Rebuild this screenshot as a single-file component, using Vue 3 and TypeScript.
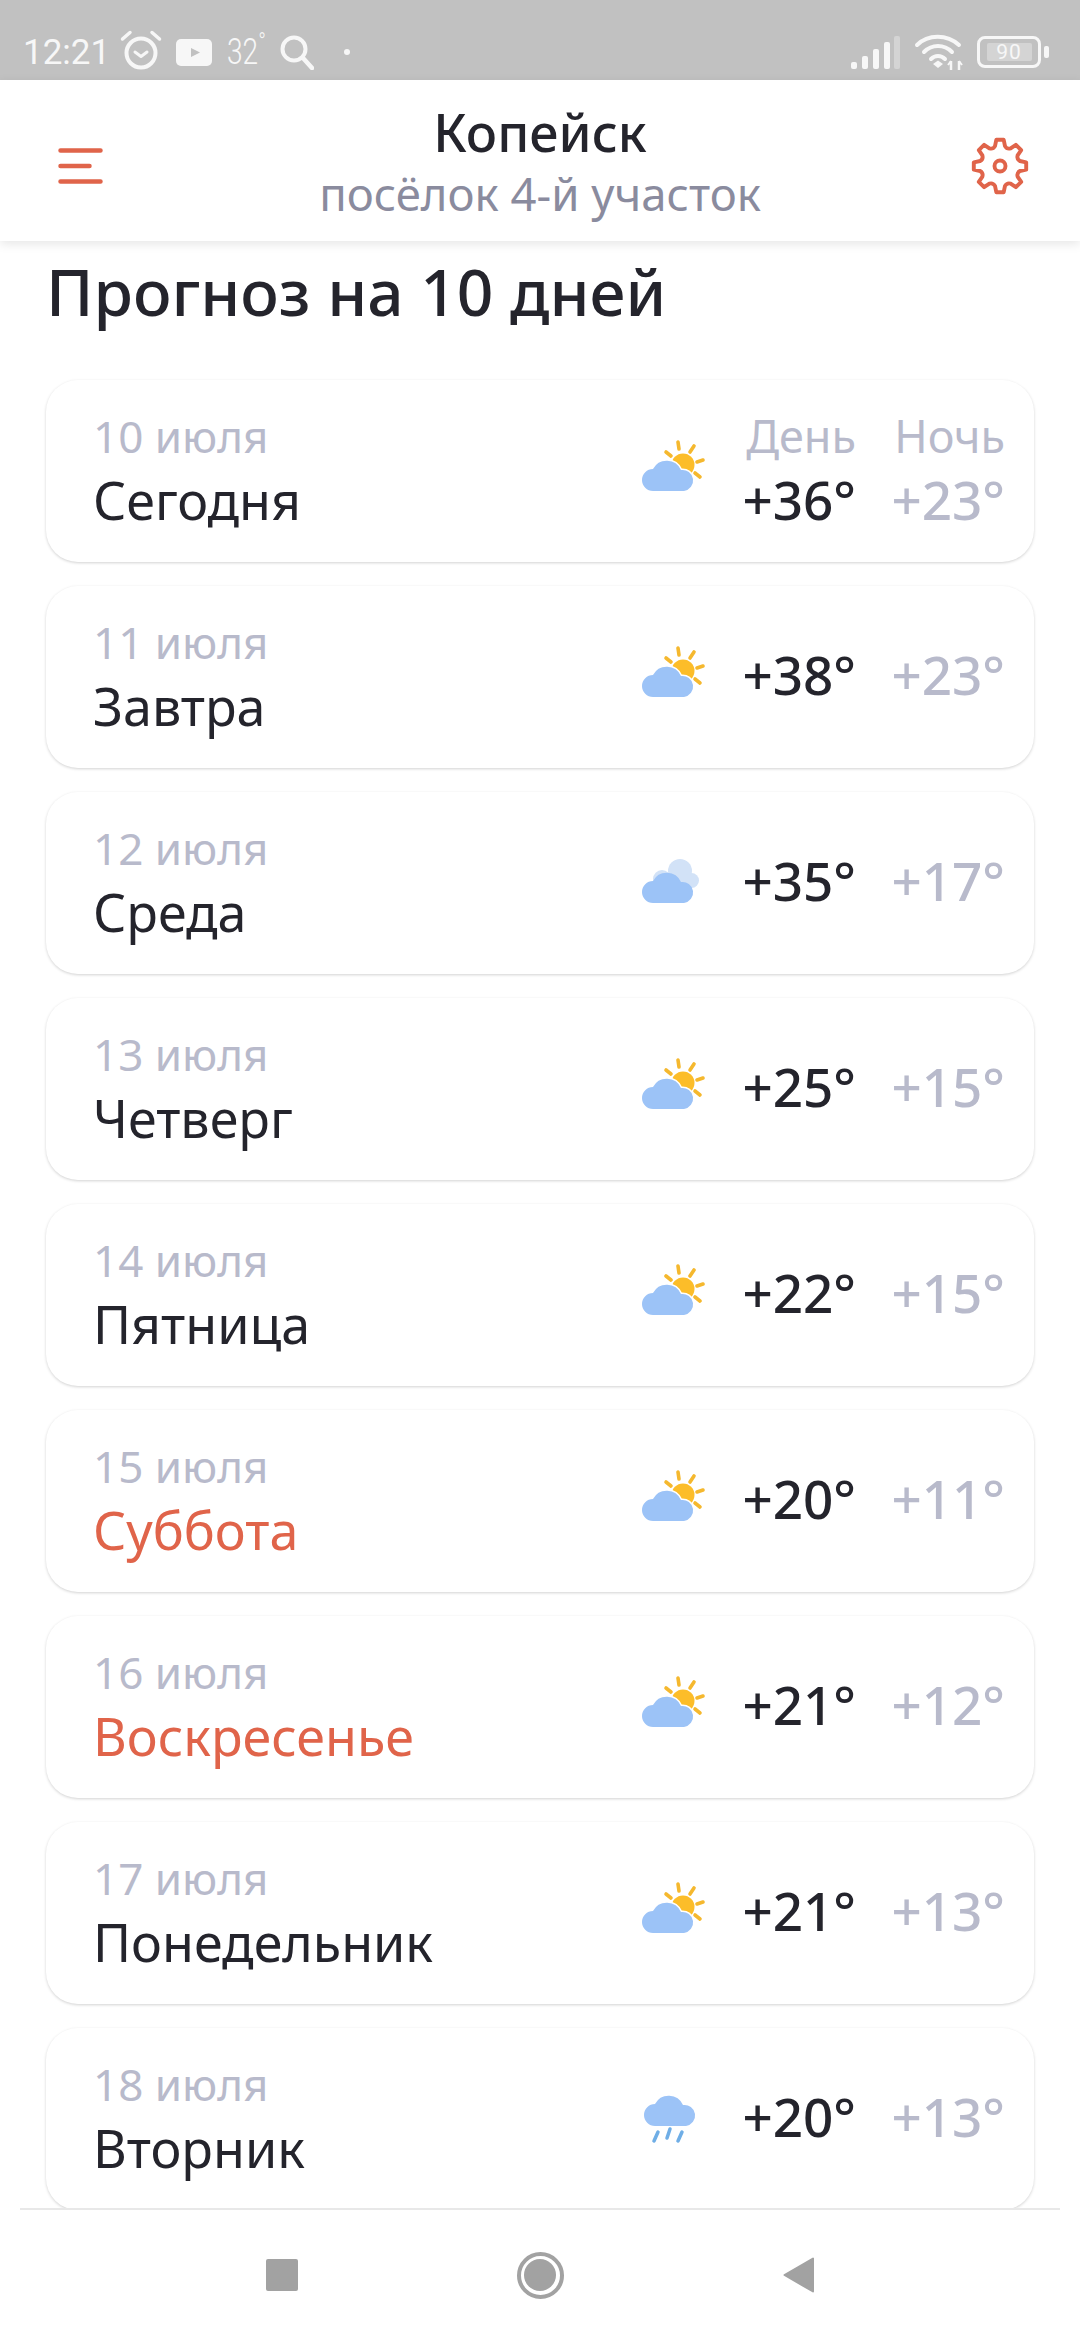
<template>
  <div class="screen">
    <div class="status-bar">
      <div class="status-left">
        <span class="time">12:21</span>
        <svg class="ic-alarm" viewBox="0 0 42 40" width="42" height="40">
          <circle cx="21" cy="23" r="14.5" fill="none" stroke="#f7f7f7" stroke-width="4" />
          <path d="M15 22l6 4.500 6-4.500" fill="none" stroke="#f7f7f7" stroke-width="3" stroke-linecap="round" stroke-linejoin="round" />
          <path d="M2.500 9L10 2.500M39.500 9L32 2.500" fill="none" stroke="#f7f7f7" stroke-width="3.500" stroke-linecap="round" />
        </svg>
        <svg class="ic-yt" viewBox="0 0 36 27" width="36" height="27">
          <rect width="36" height="27" rx="5" fill="#f7f7f7" />
          <path d="M15 9l9 4.500-9 4.500z" fill="#c1c1c1" />
        </svg>
        <span class="temp">32<sup>°</sup></span>
        <svg class="ic-search" viewBox="0 0 34 35" width="34" height="35">
          <circle cx="14" cy="14" r="11.500" fill="none" stroke="#f7f7f7" stroke-width="4" />
          <path d="M23 23l9 10" stroke="#f7f7f7" stroke-width="4.500" stroke-linecap="round" />
        </svg>
        <span class="dot"></span>
      </div>
      <div class="status-right">
        <svg viewBox="0 0 49 33" width="49" height="33">
          <rect x="0" y="26" width="6" height="7" rx="2" fill="#f7f7f7" />
          <rect x="11" y="20" width="6" height="13" rx="2" fill="#f7f7f7" />
          <rect x="22" y="13" width="6" height="20" rx="2" fill="#f7f7f7" />
          <rect x="33" y="6" width="6" height="27" rx="2" fill="#f7f7f7" />
          <rect x="43" y="0" width="6" height="33" rx="2" fill="#d4d4d4" />
        </svg>
        <svg viewBox="0 0 49 36" width="49" height="36">
          <path d="M3 11C14 0 33 0 45 11M10 18C18 10 30 10 38 18M17 25C21 21 27 21 31 25" fill="none" stroke="#f7f7f7" stroke-width="4" stroke-linecap="round" />
          <path d="M19 30l5-3.500 5 3.500-5 4z" fill="#f7f7f7" />
          <path d="M37 27v9M45 27v9" stroke="#f7f7f7" stroke-width="2.500" />
          <path d="M34 31l3-4M45 27l3 4" stroke="#f7f7f7" stroke-width="2" />
        </svg>
        <div class="battery">
          <div class="battery-body"><span class="battery-level">90</span></div>
          <div class="battery-tip"></div>
        </div>
      </div>
    </div>

    <header class="top">
      <button class="top-btn menu">
        <svg viewBox="0 0 45 36" width="45" height="36">
          <path d="M2.500 2.500h40M2.500 18h29M2.500 33.500h40" fill="none" stroke="#e0644a" stroke-width="4.500" stroke-linecap="round" />
        </svg>
      </button>
      <div class="place">
        <div class="city">Копейск</div>
        <div class="district">посёлок 4-й участок</div>
      </div>
      <button class="top-btn gear">
        <svg viewBox="0 0 58 58" width="58" height="58">
          <path :d="gearPath" fill="none" stroke="#e0644a" stroke-width="3.900" stroke-linejoin="round" />
          <circle cx="29" cy="29" r="5.500" fill="none" stroke="#e0644a" stroke-width="3.900" />
        </svg>
      </button>
    </header>

    <main class="content">
      <h1 class="heading">Прогноз на 10 дней</h1>
      <div class="list">
        <div v-for="(d, i) in days" :key="d.date" class="card">
          <div class="day">
            <div class="date">{{ d.date }}</div>
            <div class="name" :class="{ weekend: d.weekend }">{{ d.name }}</div>
          </div>
          <svg class="weather" viewBox="0 0 64 64" width="64" height="64">
            <template v-if="d.icon === 'sun'">
              <path d="M36 3l1 7M52 7l-4 6M61 21l-6 2M58 38l-5-4M24 13l5 4" fill="none" stroke="#f5b82e" stroke-width="3.600" stroke-linecap="round" />
              <circle cx="41" cy="26" r="11.500" fill="#fcbd29" />
              <path :d="cloudPath" fill="#fff" stroke="#fff" stroke-width="3" />
              <path :d="cloudPath" fill="#9cc3f7" />
            </template>
            <template v-else-if="d.icon === 'cloud'">
              <g fill="#d2e2f7">
                <circle cx="38" cy="20" r="12" />
                <circle cx="49.500" cy="29.500" r="7.500" />
                <circle cx="20" cy="28" r="9" />
                <rect x="20" y="24" width="30" height="13" />
              </g>
              <path :d="cloudPath" fill="#9cc3f7" />
            </template>
            <template v-else>
              <path :d="cloudPath" transform="translate(2 -13)" fill="#9cc3f7" />
              <path d="M16 45l-4 9M28 42l-3 9M40 45l-4 9" fill="none" stroke="#6faee6" stroke-width="3.500" stroke-linecap="round" />
            </template>
          </svg>
          <div class="temps">
            <div class="col">
              <div v-if="i === 0" class="col-label">День</div>
              <div class="t-day">{{ d.high }}</div>
            </div>
            <div class="col">
              <div v-if="i === 0" class="col-label">Ночь</div>
              <div class="t-night">{{ d.low }}</div>
            </div>
          </div>
        </div>
      </div>
    </main>

    <nav class="nav">
      <span class="nav-square"></span>
      <span class="nav-circle"><span></span></span>
      <svg viewBox="0 0 32 36" width="32" height="36">
        <path d="M30 1.500v33L1.500 18z" fill="#a2a2a2" stroke="#a2a2a2" stroke-width="2" stroke-linejoin="round" />
      </svg>
    </nav>
  </div>
</template>

<script setup lang="ts">
interface Day {
  date: string
  name: string
  high: string
  low: string
  icon: 'sun' | 'cloud' | 'rain'
  weekend?: boolean
}

const days: Day[] = [
  { date: '10 июля', name: 'Сегодня', high: '+36°', low: '+23°', icon: 'sun' },
  { date: '11 июля', name: 'Завтра', high: '+38°', low: '+23°', icon: 'sun' },
  { date: '12 июля', name: 'Среда', high: '+35°', low: '+17°', icon: 'cloud' },
  { date: '13 июля', name: 'Четверг', high: '+25°', low: '+15°', icon: 'sun' },
  { date: '14 июля', name: 'Пятница', high: '+22°', low: '+15°', icon: 'sun' },
  { date: '15 июля', name: 'Суббота', high: '+20°', low: '+11°', icon: 'sun', weekend: true },
  { date: '16 июля', name: 'Воскресенье', high: '+21°', low: '+12°', icon: 'sun', weekend: true },
  { date: '17 июля', name: 'Понедельник', high: '+21°', low: '+13°', icon: 'sun' },
  { date: '18 июля', name: 'Вторник', high: '+20°', low: '+13°', icon: 'rain' },
]

const cloudPath = 'M11 52A11 11 0 0 1 11 30A15.5 15.5 0 0 1 39 31A9 9 0 0 1 42 52Z'

// 8 rounded teeth around the centre of a 58 box
function polar(r: number, deg: number) {
  const a = ((deg - 90) * Math.PI) / 180
  return `${(29 + r * Math.cos(a)).toFixed(1)} ${(29 + r * Math.sin(a)).toFixed(1)}`
}
let gear = `M${polar(26.5, -8)}`
for (let k = 0; k < 8; k++) {
  const a = k * 45
  gear += `L${polar(26.5, a + 8)}L${polar(20.5, a + 14)}Q${polar(18, a + 22.5)} ${polar(20.5, a + 31)}L${polar(26.5, a + 37)}`
}
const gearPath = gear + 'Z'
</script>

<style>
html,
body {
  margin: 0;
  background: #fff;
}
</style>

<style scoped>
.screen {
  width: 1080px;
  height: 2340px;
  display: flex;
  flex-direction: column;
  overflow: hidden;
  background: #fff;
  font-family: "Noto Sans", "Open Sans", sans-serif;
  color: #24242c;
}
.status-bar {
  height: 80px;
  box-sizing: border-box;
  flex: none;
  background: #c1c1c1;
  display: flex;
  justify-content: space-between;
  align-items: center;
  padding: 24px 31px 0 23px;
  color: #f7f7f7;
}
.status-left,
.status-right {
  display: flex;
  align-items: center;
}
.status-right {
  gap: 14px;
}
.time {
  font: 35px Roboto, sans-serif;
  width: 87px;
}
.ic-alarm {
  margin: -4px 0 0 10px;
}
.ic-yt {
  margin-left: 14px;
}
.temp {
  font: 300 36px Roboto, sans-serif;
  margin-left: 15px;
  width: 37px;
  white-space: nowrap;
  transform: scaleX(0.78);
  transform-origin: left center;
}
.temp sup {
  font-size: 26px;
  line-height: 0;
}
.ic-search {
  margin-left: 16px;
}
.dot {
  width: 6px;
  height: 6px;
  border-radius: 50%;
  background: #f7f7f7;
  margin-left: 30px;
}
.battery {
  display: flex;
  align-items: center;
  gap: 3px;
}
.battery-body {
  width: 58px;
  height: 26px;
  border: 3px solid #f7f7f7;
  border-radius: 8px;
  display: flex;
  align-items: center;
  justify-content: center;
}
.battery-level {
  width: 45px;
  height: 18px;
  background: #d4d4d4;
  border-radius: 2px;
  font: 21px/18px Roboto, sans-serif;
  text-align: center;
  letter-spacing: 1px;
}
.battery-tip {
  width: 5px;
  height: 12px;
  background: #f7f7f7;
  border-radius: 2px;
}
.top {
  height: 161px;
  flex: none;
  display: grid;
  grid-template-columns: 1fr auto 1fr;
  align-items: center;
  padding: 0 51px;
  box-shadow: 0 3px 10px rgba(0, 0, 0, 0.1);
  position: relative;
  z-index: 1;
  background: #fff;
}
.top-btn {
  border: 0;
  background: none;
  padding: 0;
  display: flex;
  margin-top: 11px;
}
.gear {
  justify-self: end;
}
.menu {
  justify-self: start;
  margin-left: 7px;
}
.place {
  text-align: center;
  margin-top: 1px;
  white-space: nowrap;
}
.city {
  font-size: 52px;
  font-weight: 550;
  line-height: 64px;
}
.district {
  font-size: 45.5px;
  line-height: 58px;
  color: #8a8b9e;
}
.content {
  flex: 1;
  min-height: 0;
  overflow: hidden;
  padding: 11px 46px 0;
}
.heading {
  margin: 0 0 48px;
  font-size: 64px;
  font-weight: 500;
  line-height: 80px;
}
.list {
  display: flex;
  flex-direction: column;
  gap: 24px;
}
.card {
  flex: none;
  height: 182px;
  box-sizing: border-box;
  border-radius: 32px;
  background: #fff;
  box-shadow: 0 1px 3px rgba(0, 0, 0, 0.18);
  padding: 0 29px 0 47px;
  display: flex;
  align-items: center;
}
.day {
  flex: 1;
  margin-bottom: 5px;
}
.date {
  font-size: 44px;
  line-height: 62px;
  color: #b8bacb;
}
.name {
  font-size: 52px;
  line-height: 66px;
}
.name.weekend {
  color: #e0644a;
}
.weather {
  flex: none;
  margin-right: 35px;
}
.temps {
  display: flex;
  gap: 34px;
  margin-bottom: 4px;
}
.col {
  width: 115px;
  text-align: right;
}
.col-label {
  font-size: 45px;
  line-height: 62px;
  color: #b8bacb;
}
.t-day,
.t-night {
  font-size: 53px;
  font-weight: 550;
  line-height: 66px;
  white-space: nowrap;
}
.t-night {
  color: #b8bacb;
}
.nav {
  height: 130px;
  flex: none;
  margin: 0 20px;
  border-top: 2px solid #e8e8e8;
  display: flex;
  align-items: center;
  justify-content: center;
  gap: 219px;
}
.nav-square {
  width: 32px;
  height: 32px;
  background: #a2a2a2;
  border-radius: 2px;
}
.nav-circle {
  width: 47px;
  height: 47px;
  border: 4px solid #a2a2a2;
  border-radius: 50%;
  display: flex;
  align-items: center;
  justify-content: center;
  box-sizing: border-box;
}
.nav-circle span {
  width: 32px;
  height: 32px;
  background: #a2a2a2;
  border-radius: 50%;
}
</style>
